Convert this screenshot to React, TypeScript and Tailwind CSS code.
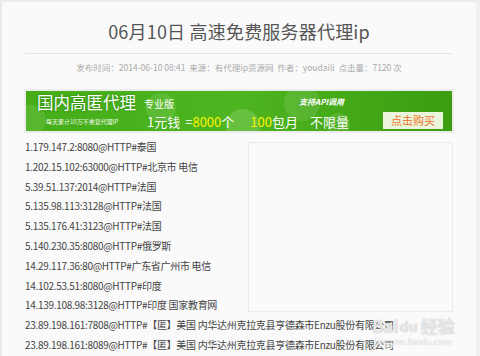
import React from "react";

const rows: { text: string }[] = [
  { text: "1.179.147.2:8080@HTTP#泰国" },
  { text: "1.202.15.102:63000@HTTP#北京市 电信" },
  { text: "5.39.51.137:2014@HTTP#法国" },
  { text: "5.135.98.113:3128@HTTP#法国" },
  { text: "5.135.176.41:3123@HTTP#法国" },
  { text: "5.140.230.35:8080@HTTP#俄罗斯" },
  { text: "14.29.117.36:80@HTTP#广东省广州市 电信" },
  { text: "14.102.53.51:8080@HTTP#印度" },
  { text: "14.139.108.98:3128@HTTP#印度 国家教育网" },
  { text: "23.89.198.161:7808@HTTP#【匿】美国 内华达州克拉克县亨德森市Enzu股份有限公司" },
  { text: "23.89.198.161:8089@HTTP#【匿】美国 内华达州克拉克县亨德森市Enzu股份有限公司" },
];

function Banner() {
  return (
    <div className="mx-[22px] border-2 border-[#ececec]">
      <div className="relative h-[40px] overflow-hidden bg-gradient-to-r from-[#45ad17] via-[#4db51f] to-[#3b9d0f] text-white">
        {/* bokeh */}
        <div className="absolute left-[120px] top-[2px] h-[30px] w-[30px] rounded-full bg-white/10" />
        <div className="absolute left-[200px] top-[18px] h-[34px] w-[34px] rounded-full bg-white/15" />
        <div className="absolute left-[258px] top-[-6px] h-[36px] w-[36px] rounded-full bg-white/10" />
        <div className="absolute left-[300px] top-[22px] h-[24px] w-[24px] rounded-full bg-white/10" />
        <div className="absolute left-[-10px] top-[14px] h-[30px] w-[30px] rounded-full bg-white/10" />

        <div className="relative flex h-full">
          <div className="flex w-[122px] flex-col pl-[11px]">
            <div className="mt-[1px] whitespace-nowrap text-[16.5px] leading-[20px] [text-shadow:0_0_2px_rgba(0,80,0,0.5)]">
              国内高匿代理
            </div>
            <div className="ml-[9px] mt-[6px] whitespace-nowrap text-[6px] leading-[8px] text-white/90">
              每天累计10万不重复代理IP
            </div>
          </div>
          <div className="flex flex-col">
            <div className="ml-[-4px] mt-[7px] text-[10px] leading-[12px]">专业版</div>
          </div>
          <div className="absolute left-[273px] top-[6px] text-[8px] font-bold italic leading-[10px]">
            支持API调用
          </div>
          <div className="absolute left-[121px] top-[23px] flex items-baseline whitespace-nowrap text-[13px] leading-[16px]">
            <span>1元钱</span>
            <span className="ml-[5px]">=</span>
            <span className="text-[#fff200]">8000</span>
            <span>个</span>
            <span className="ml-[16px] text-[#fff200]">100</span>
            <span>包月</span>
            <span className="ml-[12px]">不限量</span>
          </div>
          <div className="absolute left-[357px] top-[21px] flex h-[17px] w-[60px] items-center justify-center bg-[#eaf5dc] text-[11px] text-[#f0742c]">
            点击购买
          </div>
        </div>
      </div>
    </div>
  );
}

export default function App() {
  return (
    <div
      className="relative h-[356px] w-[480px] overflow-hidden bg-[#f0f0f0]"
      style={{ fontFamily: '"Microsoft YaHei", "Noto Sans CJK SC", "Noto Sans", sans-serif' }}
    >
      <div className="h-[356px] w-[476px] border-l-2 border-t-2 border-[#ebebeb] bg-[#fafafa]">
        <h1 className="pt-[17px] text-center text-[18px] leading-[24px] tracking-[0.2px] text-[#555]">
          06月10日 高速免费服务器代理ip
        </h1>
        <div className="mx-[23px] mt-[10px] border-t border-[#e6e6e6]" />
        <div className="mt-[7px] text-center text-[8.5px] leading-[12px] text-[#aaa]">
          发布时间：2014-06-10 08:41&nbsp;&nbsp;来源：有代理ip资源网&nbsp;&nbsp;作者：youdaili&nbsp;&nbsp;点击量：7120 次
        </div>
        <div className="mt-[16px]">
          <Banner />
        </div>

        <div className="mx-[23px] mt-[4px]">
          <div className="float-right mt-[5px] h-[170px] w-[205px] border border-[#ebebeb]" />
          {rows.map((r, i) => (
            <div key={i} className="whitespace-nowrap text-[10px] leading-[19.8px] tracking-[-0.3px] text-[#444]">
              {r.text}
            </div>
          ))}
        </div>
      </div>

      {/* baidu jingyan watermark */}
      <div className="absolute left-[372px] top-[316px] flex flex-col items-center text-white/70">
        <div className="flex items-center text-[17px] font-bold leading-[20px] [text-shadow:0_0_1px_#aaa]">
          <span>Bai</span>
          <span className="mx-[1px] text-[14px]">du</span>
          <span className="ml-[2px]">经验</span>
        </div>
        <div className="text-[9px] leading-[12px] [text-shadow:0_0_1px_#bbb]">jingyan.baidu.com</div>
      </div>
    </div>
  );
}
